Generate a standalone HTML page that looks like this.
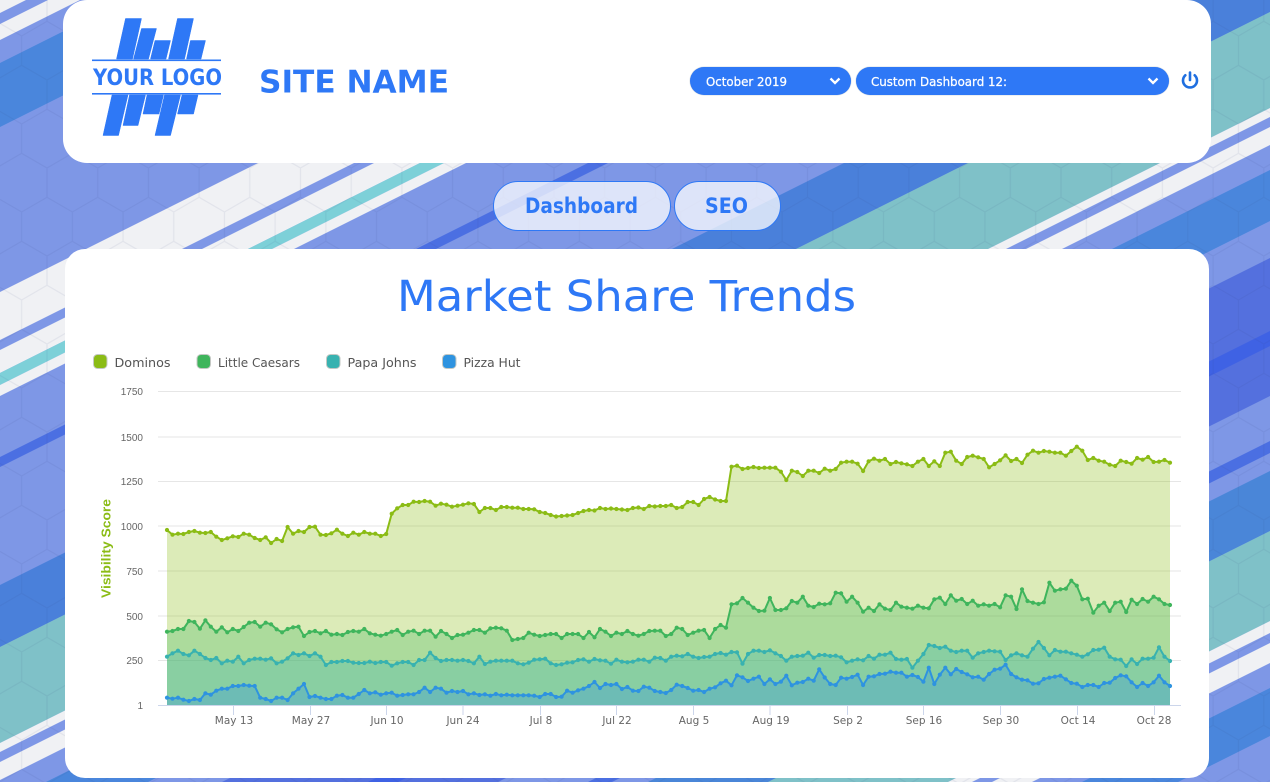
<!DOCTYPE html>
<html lang="en">
<head>
<meta charset="utf-8">
<title>Market Share Trends</title>
<style>
html,body{margin:0;padding:0;width:1270px;height:782px;overflow:hidden;background:#7e97e6}
body{position:relative;font-family:"Liberation Sans",sans-serif}
svg{position:absolute;left:0;top:0;display:block}
.card{position:absolute;background:#fff}
#head{left:63px;top:0;width:1148px;height:163px;border-radius:24px}
#main{left:65px;top:249px;width:1144px;height:529px;border-radius:20px}
.pill{position:absolute;top:181px;height:48px;border:1px solid #2e78f6;border-radius:25px;background:rgba(255,255,255,.74)}
.sel{position:absolute;top:67px;height:28px;border-radius:14px;background:#2e78f6;box-shadow:0 0 1px #89a}
</style>
</head>
<body>
<svg width="1270" height="782" viewBox="0 0 1270 782">
  <defs>
    <pattern id="hex" width="50.7" height="88" patternUnits="userSpaceOnUse" patternTransform="translate(47 168)">
      <path d="M0 0V29.3L25.35 44V73.3L0 88M25.35 73.3L50.7 88M50.7 29.3L25.35 44M50.7 0V29.3" fill="none" stroke="#28326e" stroke-opacity=".07" stroke-width="1.3"/>
    </pattern>
  </defs>
  <rect width="1270" height="782" fill="#7e97e6"/>
  <g id="bands"></g>
  <rect width="1270" height="782" fill="url(#hex)"/>
</svg>

<div class="card" id="head"></div>
<div class="card" id="main"></div>
<div class="pill" style="left:493px;width:176px"></div>
<div class="pill" style="left:674px;width:105px"></div>
<div class="sel" style="left:690px;width:161px"></div>
<div class="sel" style="left:856px;width:313px"></div>

<svg width="1270" height="782" viewBox="0 0 1270 782">
  <!-- logo -->
  <g fill="#2e78f6" stroke="#2e78f6" stroke-width=".5" stroke-linejoin="round">
    <path d="M125.500 18.500H141.500L132.500 59H116.500Z"/>
    <path d="M141.500 28.500H156.500L148.500 59H133.500Z"/>
    <path d="M155 40.500H170.500L166 59H150.500Z"/>
    <path d="M177.500 18.500H193.500L184.500 59H168.500Z"/>
    <path d="M190.500 40.500H205.500L201 59H186.500Z"/>
    <path d="M112 95H128L118.500 135.500H103Z"/>
    <path d="M129.500 95H145.500L138 125.500H123Z"/>
    <path d="M147 95H163.500L159 114H143Z"/>
    <path d="M164.500 95H180.500L170.500 135.500H155Z"/>
    <path d="M182 95H198L193.500 114H177.500Z"/>
  </g>
  <rect x="92" y="59.500" width="129" height="1.600" fill="#2e78f6"/>
  <rect x="92" y="93" width="129" height="1.600" fill="#2e78f6"/>
  <text x="93" y="85" font-size="22" font-weight="700" fill="#2e78f6" textLength="129" lengthAdjust="spacingAndGlyphs" font-family="DejaVu Sans, sans-serif">YOUR LOGO</text>
  <text x="259" y="92.500" font-size="31" font-weight="700" fill="#2e78f6" textLength="190" lengthAdjust="spacingAndGlyphs" font-family="DejaVu Sans, sans-serif">SITE NAME</text>

  <!-- selects -->
  <g font-family="DejaVu Sans, sans-serif" font-size="12" fill="#fff" stroke="#fff" stroke-width=".25">
    <text x="706" y="86" textLength="81" lengthAdjust="spacingAndGlyphs">October 2019</text>
    <text x="871" y="86" textLength="136" lengthAdjust="spacingAndGlyphs">Custom Dashboard 12:</text>
  </g>
  <path d="M830.500 78.500l4.500 4.500 4.500-4.500M1148.500 78.500l4.500 4.500 4.500-4.500" fill="none" stroke="#fff" stroke-width="2.300"/>
  <path d="M1190 72.500v7.500M1185.300 75.300a7 7 0 1 0 9.400 0" fill="none" stroke="#1f6fe0" stroke-width="2.600" stroke-linecap="round"/>

  <!-- tabs -->
  <g font-family="DejaVu Sans, sans-serif" font-size="21" font-weight="700" fill="#2e78f6">
    <text x="525" y="213" textLength="113" lengthAdjust="spacingAndGlyphs">Dashboard</text>
    <text x="705" y="213" textLength="43" lengthAdjust="spacingAndGlyphs">SEO</text>
  </g>

  <!-- title -->
  <text x="397" y="311" font-size="43" fill="#2e78f6" textLength="459" lengthAdjust="spacingAndGlyphs" font-family="DejaVu Sans, sans-serif">Market Share Trends</text>

  <!-- legend -->
  <g stroke="#c4c8c4" stroke-width="1">
    <rect x="93.500" y="354.500" width="13.500" height="14" rx="4" fill="#8bbc15"/>
    <rect x="197" y="354.500" width="13.500" height="14" rx="4" fill="#3fb55c"/>
    <rect x="326.500" y="354.500" width="13.500" height="14" rx="4" fill="#38b2b0"/>
    <rect x="442.500" y="354.500" width="13.500" height="14" rx="4" fill="#2e93e0"/>
  </g>
  <g font-family="DejaVu Sans, sans-serif" font-size="12" fill="#555">
    <text x="114.500" y="367" textLength="56" lengthAdjust="spacingAndGlyphs">Dominos</text>
    <text x="218" y="367" textLength="82" lengthAdjust="spacingAndGlyphs">Little Caesars</text>
    <text x="347.500" y="367" textLength="69" lengthAdjust="spacingAndGlyphs">Papa Johns</text>
    <text x="463.500" y="367" textLength="57" lengthAdjust="spacingAndGlyphs">Pizza Hut</text>
  </g>

  <!-- grid -->
  <path d="M158 391.500H1181M158 437H1181M158 481.500H1181M158 526H1181M158 571H1181M158 616H1181M158 660.500H1181" stroke="#e6e6e6" stroke-width="1"/>
  <path d="M158 705.500H1181M233.500 705V715M310.500 705V715M386.500 705V715M463 705V715M540.500 705V715M616.500 705V715M693.500 705V715M770 705V715M847.500 705V715M923.500 705V715M1000.500 705V715M1077.500 705V715M1154.500 705V715" stroke="#ccd6eb" stroke-width="1" fill="none"/>

  <g font-family="Liberation Sans, sans-serif" font-size="10" fill="#666" text-anchor="end">
    <text x="143" y="395">1750</text>
    <text x="143" y="441">1500</text>
    <text x="143" y="485">1250</text>
    <text x="143" y="530">1000</text>
    <text x="143" y="575">750</text>
    <text x="143" y="620">500</text>
    <text x="143" y="664">250</text>
    <text x="143" y="709">1</text>
  </g>
  <g font-family="DejaVu Sans, sans-serif" font-size="10.500" fill="#666" text-anchor="middle">
    <text x="234" y="724">May 13</text>
    <text x="311" y="724">May 27</text>
    <text x="387" y="724">Jun 10</text>
    <text x="463" y="724">Jun 24</text>
    <text x="541" y="724">Jul 8</text>
    <text x="617" y="724">Jul 22</text>
    <text x="694" y="724">Aug 5</text>
    <text x="771" y="724">Aug 19</text>
    <text x="848" y="724">Sep 2</text>
    <text x="924" y="724">Sep 16</text>
    <text x="1001" y="724">Sep 30</text>
    <text x="1078" y="724">Oct 14</text>
    <text x="1154" y="724">Oct 28</text>
  </g>
  <text transform="translate(110.500 598) rotate(-90)" font-family="Liberation Sans, sans-serif" font-size="13" font-weight="700" fill="#8bbc15" textLength="99" lengthAdjust="spacingAndGlyphs">Visibility Score</text>

  <g id="plot"></g>
</svg>

<script>
var W="#f0f1f4",T="#7fc1c8",B="#4a86dc";
var BANDS=[[0,13,W],[24,40,W],[63,127,B],[292,340,W],[350,373,W],[373,385,"#7dd0d8"],[385,396,W],[457,467,"#4b6fe2"],[585,647,"#4a80da"],[647,743,T],[743,752,W],[762,780,W],[805,856,B],[893,1031,"#5470de"],[966,981,"#3f62e4"],[1076,1088,"#4b6fe2"],[1106,1166,"#4a86d8"],[1166,1256,T],[1256,1268,W],[1278,1298,W],[1323,1371,B]];
function bl(c){return c<=782?[0,c]:[2*(c-782),782]}
function tr(c){return c>=635?[1270,c-635]:[2*c,0]}
var bg="";
BANDS.forEach(function(b){
  var a=b[0],z=b[1],p=[bl(a),tr(a)];
  if(a<635&&z>635)p.push([1270,0]);
  p.push(tr(z));
  p.push(bl(z));
  if(a<782&&z>782)p.push([0,782]);
  bg+='<polygon points="'+p.join(" ")+'" fill="'+b[2]+'"/>';
});
document.getElementById("bands").innerHTML=bg;

var S=[
["#8bbc15","530 534.7 533.7 534 532 531 532.7 533 532 536.7 540 538.3 536.3 537 533.7 534.7 538 540 537.3 543 539 541 527 533.7 531 532 527 526.7 534.7 535 533.3 529.7 533.7 536 532.7 534.7 532 533.7 533.7 536 534 513.7 508.3 505 505 501.7 502 501 501.7 505.7 503.7 504.7 506.7 505.7 504.7 503.3 504 512 508 508 510 507 507 507.7 507.7 509 509 509.3 512 513 515 516.5 516 515.5 515 513 511 510 510.5 508 509 508.5 509 509.5 510 508 507.5 509 506 506.5 506 506 505 508 507 502 502 505 499 497 499.5 501 501 466.7 465.7 469 468 467 468 467.7 467.7 467.7 471.7 480 470.7 472 476 470.7 470.7 473 468.7 470.7 469 462.7 461.7 461.7 463.7 471 461.3 458.7 460.7 459 464 462 463.3 464.3 466 461.7 459 466 461.3 466 452.7 451.7 460.7 464 457 455.7 457.3 459 467.3 464 460.3 455.3 461 459 463 454.7 450.7 452.7 451 451.7 452.7 452.7 455.7 451 446.7 450.7 460 458 460.7 461.7 464.7 466 460.7 462 463.7 458 459.7 457 462 461.7 460 462.7"],
["#3fb55c","631.7 631 629 629 621 622 628.7 620.3 626.7 631.7 627.3 632.3 629 631 627 622.7 622 626.7 622.7 624.3 629.3 632.3 629 627.3 626.7 636 632 631 633.3 631 634.7 634 635 632 631 631.7 629 633.3 634.7 635.7 634 631.7 630 635 631.7 630.7 634 630.7 630.7 636.7 631 634 638 635 634.7 632.7 630 630 632.7 628.3 627.7 628.3 630.7 640 639 638 632.7 634.7 636 635 634 634 638 634 634 634 638 632 637.3 629 631.7 636 632.7 634 631 634 635.7 634 631 630.7 630.7 636 634 627.7 629 635 632.7 630.7 630 638 629 625 627.7 604.3 603.3 598 602.7 607.7 611 610.7 598 610 610 608.3 601 602.7 596.7 605.7 607 603.7 604.3 603.3 592.7 593.3 601.7 596.7 602.7 611.7 607.7 611 604.3 608.7 610 602.7 606.7 607.7 608.7 605.7 607.7 608.3 599.3 597.7 604 595.3 600.7 599 604 600.7 605.7 604.3 605.7 604 607.3 595.3 596.7 609 589.3 601 602.7 604 602.3 582.7 590.7 589.3 588.7 580.7 585.7 599.3 598.7 612.7 605.7 602.7 611 602.7 601.7 612 599.7 604 599 601.7 596.7 599.3 604 605"],
["#38b2b0","656.7 653.3 650.7 654 655.3 650.7 654 658 660 658 663.3 660.7 661.7 656.7 663.3 660 658.7 658.7 659.7 658.3 663.3 661.7 658.3 653.3 655 653.3 656 653.3 656.7 665 662 662 661 661 662.7 663 663 661.7 663 662 662 665.7 663.3 662 662 665 660 660 652.7 658 661 660 660 660.7 660 661 663.3 656.7 664 661.7 660.7 660.7 660.7 660.7 663.3 664.3 662.7 659.7 659.3 658.7 663.3 665 664.3 662.7 662.3 660 659.3 661.7 659 660.3 660.7 663.7 659.7 661.7 662.3 661.7 659.7 659.7 661.7 657.7 658 660.7 656.7 655.7 656.3 654 656.7 658 657 656.7 654 653 654.7 652 652.3 663.7 654 650.7 650.7 652 650.3 653.3 656 660.7 656.7 656 655.7 652.7 657.7 655 655 656 655.7 657.3 662.3 660.7 659.3 660.3 656 658.7 654.7 654.7 652.7 659 659.7 659 667.7 660.7 654 645 646 648 646.7 650.7 652 650.7 650.7 657.7 653.3 652 650.7 651.3 651.7 660 655.3 653.3 655.3 656.7 648.7 642 648 655.3 650 651.7 651.7 653.3 654.7 656.7 654.3 650 649.7 647.7 656.7 659.3 659.7 666 659.3 664 658.7 658.7 657.7 647.3 656.7 661"],
["#2e93e0","697.7 698.7 697.7 699.7 701 699 700 693.3 694.7 690.7 688.7 688.7 686 686 685 685.7 686 697.7 699 701 697.7 697.7 700 693.3 688.7 684 697 696 697.7 699 699 695.7 695 697.7 697.7 694 690 693.3 692.3 694.7 693.3 692.7 695.7 695 694.3 694.3 692 687.7 692 687.7 688.7 692.7 691 692 691 694.3 693.3 695 694.3 695.7 694 695.3 694.7 695.3 695.3 695.3 695.3 695.7 697 694 694 697 696.7 690.7 692.7 690.3 688.7 686 682 688 684 685 684 689 687 690.7 691 686.7 687.7 691 692 693 690 684.7 686 688 690.7 690 692 688.7 687.3 683.3 680.7 685.3 675.3 677.3 681 678.7 676.7 684 679.3 684 681.7 675.7 685.3 682.7 682 678.7 680.7 669.3 677.5 684 685 677.7 678.7 677 674.7 685 676.7 676.3 674 673.7 671.7 672.7 672.7 676.7 675 677 681.7 667.7 684 674.7 667.7 674.3 669 672 674.3 677.3 676.7 679.7 674 669.7 668.7 664.7 674 677.3 679.7 680.3 683.7 683.3 679 677.7 676.7 675.7 679.3 683 683.7 687 685 685 687 683 682.7 678 675.3 676.3 682.3 687 683 686 682.3 675.7 682.3 686"]
];
var out="",X=function(i,n){return (167+i*1003/(n-1)).toFixed(1)};
S.forEach(function(s){
  var v=s[1].split(" "),n=v.length,p=[],c="";
  v.forEach(function(y,i){var x=X(i,n);p.push(x+" "+y);c+='<circle cx="'+x+'" cy="'+y+'" r="2.1"/>'});
  out+='<path d="M167 705L'+p.join("L")+'L1170 705Z" fill="'+s[0]+'" fill-opacity=".3"/>';
  out+='<path d="M'+p.join("L")+'" fill="none" stroke="'+s[0]+'" stroke-width="2" stroke-linejoin="round"/>';
  out+='<g fill="'+s[0]+'">'+c+'</g>';
});
document.getElementById("plot").innerHTML=out;
</script>
</body>
</html>
